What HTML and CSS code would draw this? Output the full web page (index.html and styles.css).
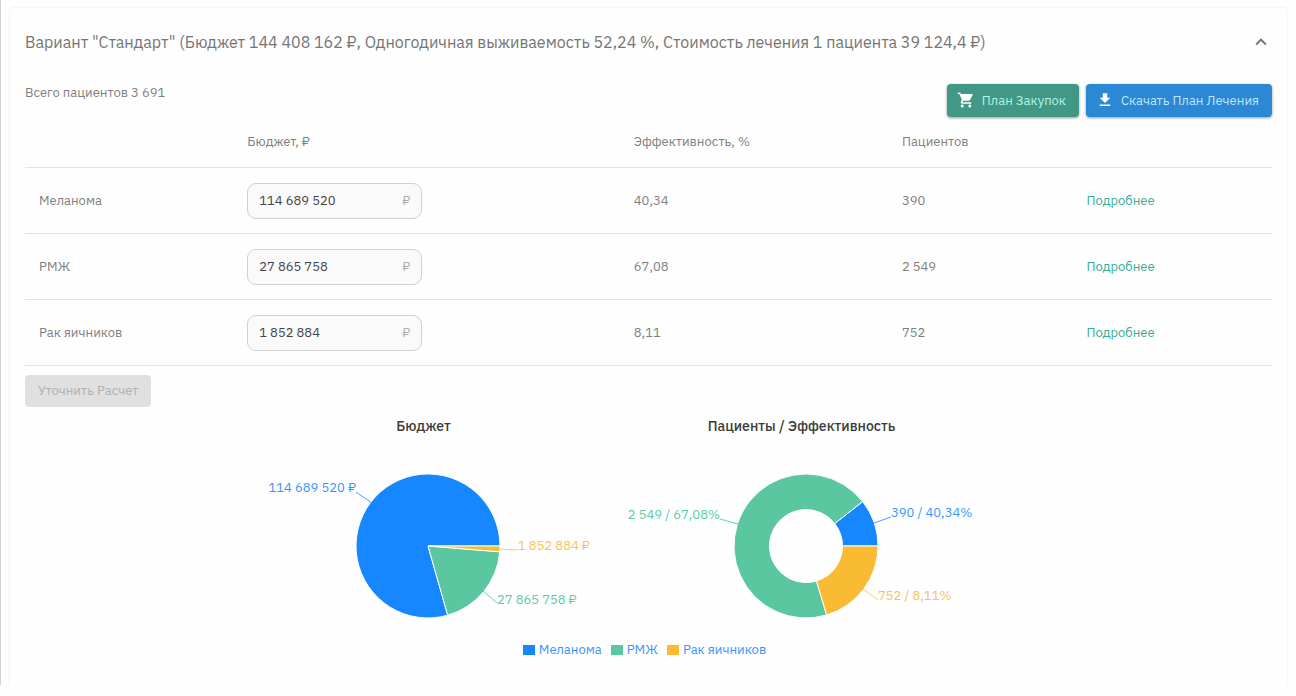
FILE: index.html
```html
<!DOCTYPE html>
<html lang="ru">
<head>
<meta charset="utf-8">
<title>Вариант "Стандарт"</title>
<link rel="stylesheet" href="styles.css">
</head>
<body>
<main class="page">
  <section class="card">
    <header class="card-header">
      <h1 class="card-title">Вариант "Стандарт" (Бюджет 144 408 162 ₽, Одногодичная выживаемость 52,24 %, Стоимость лечения 1 пациента 39 124,4 ₽)</h1>
      <button class="collapse" type="button" aria-label="Свернуть">
        <svg viewBox="0 0 24 24" width="22" height="22"><path d="M12 8l-6 6 1.41 1.41L12 10.83l4.59 4.58L18 14z"/></svg>
      </button>
    </header>

    <div class="toolbar">
      <p class="total">Всего пациентов 3 691</p>
      <div class="actions">
        <button class="btn btn-green" type="button">
          <svg class="icon-cart" viewBox="0 0 24 24" width="18" height="18"><path d="M7 18c-1.1 0-1.99.9-1.99 2S5.900 22 7 22s2-.9 2-2-.9-2-2-2zM1 2v2h2l3.600 7.590-1.350 2.450c-.16.28-.25.61-.25.96 0 1.100.9 2 2 2h12v-2H7.420c-.14 0-.25-.11-.25-.25l.03-.12.9-1.630h7.450c.75 0 1.410-.41 1.750-1.030l3.580-6.490A1 1 0 0 0 20 4H5.210l-.94-2H1zm16 16c-1.100 0-1.990.9-1.990 2s.89 2 1.990 2 2-.9 2-2-.9-2-2-2z"/></svg>
          План Закупок
        </button>
        <button class="btn btn-blue" type="button">
          <svg viewBox="0 0 24 24" width="18" height="18"><path d="M19 9h-4V3H9v6H5l7 7 7-7zM5 18v2h14v-2H5z"/></svg>
          Скачать План Лечения
        </button>
      </div>
    </div>

    <table class="plan">
      <colgroup><col class="c-name"><col class="c-budget"><col class="c-effect"><col class="c-patients"><col class="c-more"></colgroup>
      <thead>
        <tr><td></td><th scope="col">Бюджет, ₽</th><th scope="col">Эффективность, %</th><th scope="col">Пациентов</th><td></td></tr>
      </thead>
      <tbody>
        <tr>
          <th scope="row"><label for="b1">Меланома</label></th>
          <td><span class="field"><input id="b1" type="text" value="114 689 520"><span class="unit">₽</span></span></td>
          <td>40,34</td><td>390</td><td><a href="#">Подробнее</a></td>
        </tr>
        <tr>
          <th scope="row"><label for="b2">РМЖ</label></th>
          <td><span class="field"><input id="b2" type="text" value="27 865 758"><span class="unit">₽</span></span></td>
          <td>67,08</td><td>2 549</td><td><a href="#">Подробнее</a></td>
        </tr>
        <tr>
          <th scope="row"><label for="b3">Рак яичников</label></th>
          <td><span class="field"><input id="b3" type="text" value="1 852 884"><span class="unit">₽</span></span></td>
          <td>8,11</td><td>752</td><td><a href="#">Подробнее</a></td>
        </tr>
      </tbody>
    </table>

    <button class="btn btn-refine" type="button" disabled>Уточнить Расчет</button>

    <div class="charts">
      <figure class="chart">
        <figcaption>Бюджет</figcaption>
        <svg viewBox="0 0 378 200" width="378" height="200">
          <g class="slices" transform="translate(189 100)">
            <path class="s-blue" d="M0 0L72 0A72 72 0 1 0 19.700 69.200Z"/>
            <path class="s-green" d="M0 0L19.700 69.200A72 72 0 0 0 71.800 5.800Z"/>
            <path class="s-amber" d="M0 0L71.800 5.800A72 72 0 0 0 72 0Z"/>
          </g>
          <path class="l-blue" d="M133 57L117 46"/>
          <path class="l-amber" d="M261 103L279 104"/>
          <path class="l-green" d="M244 145L258 157"/>
          <text class="t-blue" x="117" y="46" text-anchor="end">114 689 520 ₽</text>
          <text class="t-amber" x="279" y="104">1 852 884 ₽</text>
          <text class="t-green" x="258" y="158">27 865 758 ₽</text>
        </svg>
      </figure>
      <figure class="chart">
        <figcaption>Пациенты / Эффективность</figcaption>
        <svg viewBox="0 0 378 200" width="378" height="200">
          <g class="slices" transform="translate(189 100)">
            <path class="s-blue" d="M36.500 0L72 0A72 72 0 0 0 56.700 -44.400L28.700 -22.500A36.500 36.500 0 0 1 36.500 0Z"/>
            <path class="s-green" d="M28.700 -22.500L56.700 -44.400A72 72 0 1 0 20.600 69L10.500 35A36.500 36.500 0 1 1 28.700 -22.500Z"/>
            <path class="s-amber" d="M10.500 35L20.600 69A72 72 0 0 0 72 0L36.500 0A36.500 36.500 0 0 1 10.500 35Z"/>
          </g>
          <path class="l-blue" d="M257 77L274 71"/>
          <path class="l-green" d="M121 78L103 73"/>
          <path class="l-amber" d="M246 143L261 154"/>
          <text class="t-blue" x="274" y="71">390 / 40,34%</text>
          <text class="t-green" x="103" y="73" text-anchor="end">2 549 / 67,08%</text>
          <text class="t-amber" x="261" y="154">752 / 8,11%</text>
        </svg>
      </figure>
    </div>

    <ul class="legend">
      <li><span class="swatch sw-blue"></span>Меланома</li>
      <li><span class="swatch sw-green"></span>РМЖ</li>
      <li><span class="swatch sw-amber"></span>Рак яичников</li>
    </ul>
  </section>
</main>
</body>
</html>
```
FILE: styles.css
```css
* { box-sizing: border-box; }

body {
  margin: 0;
  background: #fefefe;
  color: #7e7e7e;
  font: 13px/20px "IBM Plex Sans", "Noto Sans", sans-serif;
}

button, input { font: inherit; color: inherit; }

.page {
  padding: 8px 9px 0;
  border-left: 1px solid #d2d2d2;
}

.card {
  padding: 0 15px 25px;
  border-radius: 4px 4px 0 0;
  box-shadow: 0 0 2px 1px #f3f3f3;
  clip-path: inset(-3px -3px 0 -3px);
}

.card-header {
  display: flex;
  justify-content: space-between;
  align-items: center;
  height: 68px;
}

.card-title {
  margin: 0;
  font-size: 16px;
  line-height: 24px;
  font-weight: 400;
  color: #757575;
}

.collapse {
  display: flex;
  padding: 0;
  border: 0;
  background: none;
  fill: #757575;
}

.toolbar {
  display: flex;
  justify-content: space-between;
  align-items: flex-start;
  height: 40px;
  padding-top: 8px;
}

.total { margin: -1px 0 0; }

.actions { display: flex; gap: 7px; }

.btn {
  display: inline-flex;
  align-items: center;
  height: 33px;
  padding: 0 13px;
  border: 0;
  border-radius: 4px;
  white-space: nowrap;
}

.btn svg { margin: 0 7px 2px -3px; fill: #fff; }

.btn-green {
  background: #429886;
  color: #b5f2e4;
  box-shadow: 0 1px 3px rgba(0, 0, 0, .4);
}

.btn-blue {
  background: #2a88d4;
  color: #bfe6ff;
  box-shadow: 0 1px 3px rgba(0, 0, 0, .4);
}

.btn-refine {
  height: 32px;
  margin-top: 9px;
  background: #e0e0e0;
  color: #b0b0b0;
}

.plan {
  width: 100%;
  table-layout: fixed;
  border-collapse: collapse;
}

.c-name { width: 16.7%; }
.c-budget { width: 31%; }
.c-effect { width: 21.5%; }
.c-patients { width: 14.8%; }
.c-more { width: 16%; }

.plan th, .plan td {
  height: 66px;
  padding: 1px 14px 0;
  border-bottom: 1px solid #e4e4e4;
  text-align: left;
  font-weight: 400;
}

.plan thead th, .plan thead td { height: 51px; }

.plan a { color: #35ad99; text-decoration: none; }

.field {
  display: flex;
  align-items: center;
  width: 175px;
  height: 36px;
  padding: 0 11px;
  border: 1px solid #d0d0d0;
  border-radius: 9px;
  background: #fafafa;
}

.field input {
  flex: 1;
  min-width: 0;
  padding: 0;
  border: 0;
  outline: 0;
  background: none;
  color: #444;
}

.unit { color: #adadad; }

.charts {
  display: flex;
  justify-content: center;
  padding: 9px 63px 0 0;
}

.chart { margin: 0; width: 378px; }

.chart figcaption {
  padding-right: 9px;
  text-align: center;
  font-size: 14px;
  line-height: 20px;
  font-weight: 500;
  color: #3a3a3a;
}

.chart svg { display: block; margin: 10px 0 -6px; fill: none; }

.slices { stroke: #fff; stroke-width: 1; }
.s-blue { fill: #1687ff; }
.s-green { fill: #5ac7a0; }
.s-amber { fill: #f9bb33; }
.l-blue { stroke: #48a0ff; }
.l-green { stroke: #68d3b1; }
.l-amber { stroke: #fccb63; }
.t-blue { fill: #3696ff; }
.t-green { fill: #58cda8; }
.t-amber { fill: #fac350; }

.legend {
  display: flex;
  justify-content: center;
  gap: 9px;
  margin: 0;
  padding: 0 8px 0 0;
  list-style: none;
  color: #3696ff;
}

.legend li { display: flex; align-items: center; gap: 4px; }
.swatch { width: 12px; height: 10px; }
.sw-blue { background: #1687ff; }
.sw-green { background: #5ac7a0; }
.sw-amber { background: #f9bb33; }
```
